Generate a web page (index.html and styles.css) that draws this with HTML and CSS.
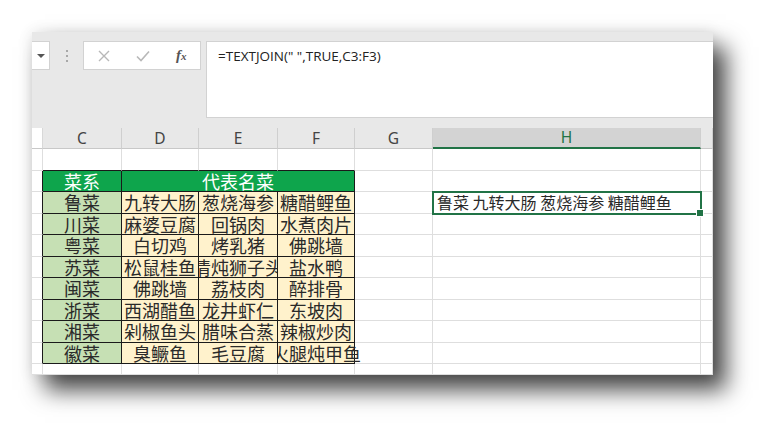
FILE: index.html
```html
<!DOCTYPE html>
<html lang="zh-CN">
<head>
<meta charset="utf-8">
<title>TEXTJOIN</title>
<link rel="stylesheet" href="styles.css">
</head>
<body>
<div class="window">
  <div class="formula-area">
    <div class="namebox"><span class="tri"></span></div>
    <div class="dots"><i></i><i></i><i></i></div>
    <div class="btnbox">
      <svg class="ico" width="12" height="12" viewBox="0 0 12 12"><path d="M1 1 L11 11 M11 1 L1 11" stroke="#b8b8b8" stroke-width="1.4" fill="none"/></svg>
      <svg class="ico" width="14" height="12" viewBox="0 0 14 12"><path d="M1 6.5 L5 10.5 L13 1.5" stroke="#b8b8b8" stroke-width="1.6" fill="none"/></svg>
      <span class="fx">f<span class="fxx">x</span></span>
    </div>
    <div class="formula">=TEXTJOIN(" ",TRUE,C3:F3)</div>
  </div>
  <div class="sheet">
    <div class="ch stub"></div>
    <div class="ch">C</div>
    <div class="ch">D</div>
    <div class="ch">E</div>
    <div class="ch">F</div>
    <div class="ch">G</div>
    <div class="ch ch-sel">H</div>
    <div class="ch"></div>

    <!-- row 1 -->
    <div class="c stub"></div>
    <div class="c above"></div><div class="c above"></div><div class="c above"></div><div class="c above"></div>
    <div class="c"></div><div class="c"></div><div class="c"></div>

    <!-- row 2 -->
    <div class="c stub tl"></div>
    <div class="c t head">菜系</div>
    <div class="c t head span3">代表名菜</div>
    <div class="c"></div><div class="c"></div><div class="c"></div>

    <div class="c stub tl"></div>
    <div class="c t cat">鲁菜</div><div class="c t dish">九转大肠</div><div class="c t dish">葱烧海参</div><div class="c t dish">糖醋鲤鱼</div>
    <div class="c"></div><div class="c sel">鲁菜 九转大肠 葱烧海参 糖醋鲤鱼</div><div class="c"></div>

    <div class="c stub tl"></div>
    <div class="c t cat">川菜</div><div class="c t dish">麻婆豆腐</div><div class="c t dish">回锅肉</div><div class="c t dish">水煮肉片</div>
    <div class="c"></div><div class="c"></div><div class="c"></div>

    <div class="c stub tl"></div>
    <div class="c t cat">粤菜</div><div class="c t dish">白切鸡</div><div class="c t dish">烤乳猪</div><div class="c t dish">佛跳墙</div>
    <div class="c"></div><div class="c"></div><div class="c"></div>

    <div class="c stub tl"></div>
    <div class="c t cat">苏菜</div><div class="c t dish">松鼠桂鱼</div><div class="c t dish">清炖狮子头</div><div class="c t dish">盐水鸭</div>
    <div class="c"></div><div class="c"></div><div class="c"></div>

    <div class="c stub tl"></div>
    <div class="c t cat">闽菜</div><div class="c t dish">佛跳墙</div><div class="c t dish">荔枝肉</div><div class="c t dish">醉排骨</div>
    <div class="c"></div><div class="c"></div><div class="c"></div>

    <div class="c stub tl"></div>
    <div class="c t cat">浙菜</div><div class="c t dish">西湖醋鱼</div><div class="c t dish">龙井虾仁</div><div class="c t dish">东坡肉</div>
    <div class="c"></div><div class="c"></div><div class="c"></div>

    <div class="c stub tl"></div>
    <div class="c t cat">湘菜</div><div class="c t dish">剁椒鱼头</div><div class="c t dish">腊味合蒸</div><div class="c t dish">辣椒炒肉</div>
    <div class="c"></div><div class="c"></div><div class="c"></div>

    <div class="c stub tl"></div>
    <div class="c t cat">徽菜</div><div class="c t dish">臭鳜鱼</div><div class="c t dish">毛豆腐</div><div class="c t dish spill">火腿炖甲鱼</div>
    <div class="c"></div><div class="c"></div><div class="c"></div>

    <div class="c stub"></div>
    <div class="c"></div><div class="c"></div><div class="c"></div><div class="c"></div>
    <div class="c"></div><div class="c"></div><div class="c"></div>
  </div>
</div>
</body>
</html>
```
FILE: styles.css
```css
html, body {
  margin: 0;
  padding: 0;
  background: #ffffff;
}
body {
  width: 778px;
  height: 440px;
  overflow: hidden;
  font-family: "Noto Sans", "Noto Sans CJK SC", sans-serif;
}
.window {
  margin: 32px 0 0 32px;
  width: 681px;
  height: 343px;
  background: #ffffff;
  overflow: hidden;
  box-shadow: 13px 15px 22px rgba(0, 0, 0, 0.72), 0 0 14px rgba(0, 0, 0, 0.10);
}
.formula-area {
  height: 96px;
  box-sizing: border-box;
  background: #e8e8e8;
  display: flex;
  align-items: flex-start;
  padding-top: 9px;
}
.namebox {
  width: 18px;
  height: 29px;
  box-sizing: border-box;
  background: #ffffff;
  border: 1px solid #d2d2d2;
  border-left: none;
  display: flex;
  align-items: center;
  justify-content: flex-start;
  padding-left: 5px;
}
.tri {
  width: 0;
  height: 0;
  border-left: 4px solid transparent;
  border-right: 4px solid transparent;
  border-top: 4px solid #555555;
}
.dots {
  margin-left: 16px;
  margin-top: 9px;
  display: flex;
  flex-direction: column;
  gap: 3px;
}
.dots i {
  display: block;
  width: 2px;
  height: 2px;
  background: #a8a8a8;
}
.btnbox {
  margin-left: 15px;
  width: 118px;
  height: 29px;
  box-sizing: border-box;
  background: #ffffff;
  border: 1px solid #d2d2d2;
  display: flex;
  align-items: center;
  padding-left: 14px;
  gap: 26px;
}
.fx {
  font-family: "Liberation Serif", "DejaVu Serif", serif;
  font-style: italic;
  font-weight: bold;
  font-size: 15px;
  color: #555555;
  line-height: 1;
}
.fxx {
  font-size: 11px;
}
.formula {
  margin-left: 5px;
  flex: 1;
  height: 77px;
  box-sizing: border-box;
  background: #ffffff;
  border: 1px solid #d2d2d2;
  border-right: none;
  padding: 5px 11px;
  font-family: "Open Sans", "Noto Sans", sans-serif;
  font-size: 13.5px;
  line-height: 19px;
  color: #222222;
}
.sheet {
  display: grid;
  grid-template-columns: 11px 79px 77px 79px 77px 78px 268px 12px;
  grid-template-rows: 21px repeat(10, 21.5px) 11px;
}
.ch {
  background: #e8e8e8;
  border-right: 1px solid #cfcfcf;
  border-bottom: 1px solid #c8c8c8;
  box-sizing: border-box;
  display: flex;
  align-items: center;
  justify-content: center;
  font-family: "Noto Sans", sans-serif;
  font-size: 15.5px;
  color: #444444;
  line-height: 19px;
}
.ch.stub {
  border-right-color: #d8d8d8;
}
.ch-sel {
  background: #d3d3d3;
  color: #217346;
  border-bottom: 2px solid #217346;
}
.c {
  box-sizing: border-box;
  border-right: 1px solid #dedede;
  border-bottom: 1px solid #dedede;
  display: flex;
  align-items: center;
  justify-content: center;
  overflow: hidden;
  white-space: nowrap;
  font-family: "Noto Sans CJK SC", sans-serif;
  font-size: 18px;
  line-height: 20px;
  color: #2a2a2a;
}
.stub {
  background: #ffffff;
}
.c.tl {
  border-right-color: #1a1a1a;
}
.c.above {
  border-bottom-color: #1a1a1a;
}
.c.t {
  border-right-color: #1a1a1a;
  border-bottom-color: #1a1a1a;
}
.head {
  background: #0ea54c;
  color: #ffffff;
}
.span3 {
  grid-column: span 3;
}
.cat {
  background: #c6e0b4;
}
.dish {
  background: #fff2cc;
}
.spill {
  overflow: visible;
  clip-path: inset(0 -40px 0 0);
  position: relative;
  z-index: 1;
}
.sel {
  position: relative;
  z-index: 2;
  justify-content: flex-start;
  padding-left: 4px;
  font-size: 16px;
  outline: 2px solid #217346;
  outline-offset: -1px;
  overflow: visible;
}
.sel::after {
  content: "";
  position: absolute;
  right: -4px;
  bottom: -4px;
  width: 6px;
  height: 6px;
  background: #217346;
  border: 1px solid #ffffff;
}
```
